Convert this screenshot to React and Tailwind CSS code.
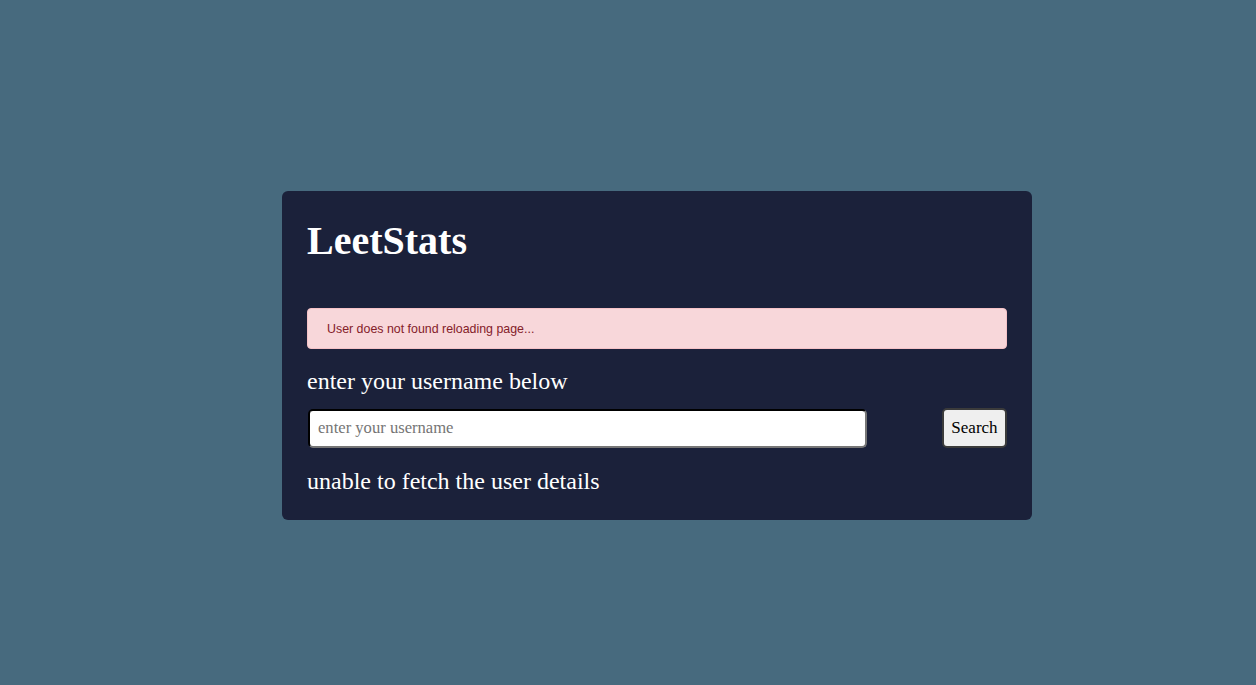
export default function App() {
  return (
    <div className="min-h-[685px] w-full bg-[#476a7e] flex justify-start pl-[282px] pt-[191px]">
      <div className="w-[750px] h-[329px] bg-[#1b213a] rounded-[6px] px-[25px] pt-[27px] pb-[24px] flex flex-col" style={{ fontFamily: '"Liberation Serif", serif' }}>
        <h1 className="text-[40px] leading-[46px] font-bold text-white">LeetStats</h1>
        <div className="mt-[44px] h-[41px] bg-[#f8d7da] border border-[#f5c2c7] rounded-[4px] pl-[19px] pt-[1px] flex items-center text-[12.4px] text-[#842029]" style={{ fontFamily: '"Liberation Sans", Arial, sans-serif' }}>
          User does not found reloading page...
        </div>
        <p className="mt-[18px] text-[24px] leading-[28px] text-white">enter your username below</p>
        <div className="mt-[13px] flex items-center justify-between">
          <input
            placeholder="enter your username"
            className="ml-[1px] w-[559px] h-[39px] bg-white rounded-[5px] border-2 [border-style:inset] border-t-[#2a2a2a] border-l-[#3a3a3a] border-b-[#767676] border-r-[#767676] px-[8px] text-[16.6px] text-black placeholder:text-[#757575] outline-none"
            style={{ fontFamily: '"Liberation Serif", serif' }}
          />
          <button
            className="w-[65px] h-[40px] bg-[#efefef] rounded-[5px] border-2 border-[#3b3b3b] text-[17px] text-black"
            style={{ fontFamily: '"Liberation Serif", serif' }}
          >
            Search
          </button>
        </div>
        <p className="mt-[19px] text-[24px] leading-[28px] text-white">unable to fetch the user details</p>
      </div>
    </div>
  );
}
